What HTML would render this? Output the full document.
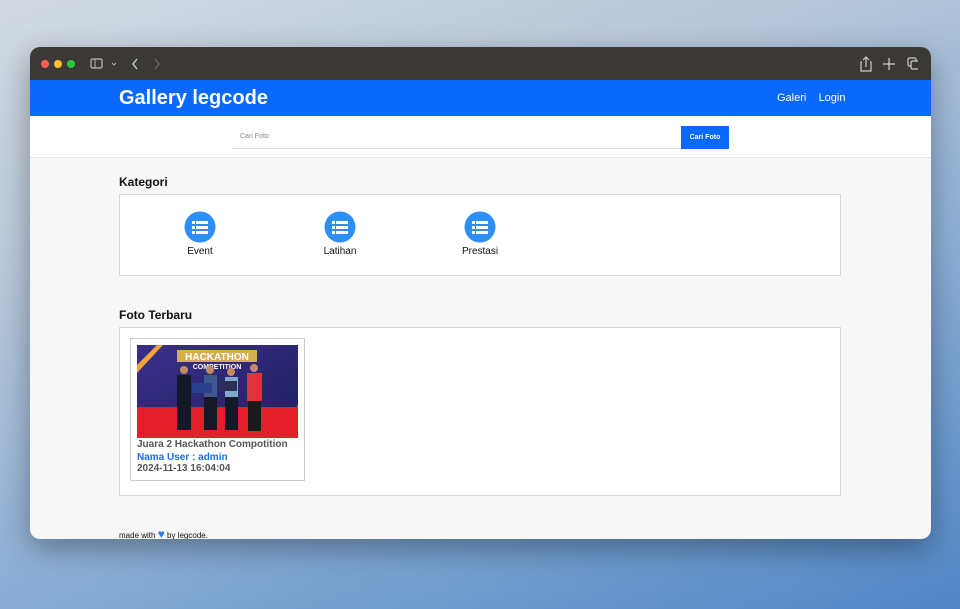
<!DOCTYPE html>
<html><head><meta charset="utf-8"><style>
*{margin:0;padding:0;box-sizing:border-box}
body{width:960px;height:609px;overflow:hidden;font-family:"Liberation Sans",Arial,sans-serif;background:linear-gradient(160deg,#d3dae2 0%,#b7c7da 30%,#8fb0d6 60%,#4f86c6 100%);position:relative}
.win{position:absolute;left:30px;top:47px;width:901px;height:492px;border-radius:10px;overflow:hidden;background:#f7f7f7;box-shadow:0 10px 30px rgba(0,0,0,.35)}
.tb{height:33px;background:#3b3936;position:relative}
.dot{position:absolute;top:13px;width:8px;height:8px;border-radius:50%}
.hdr{height:36px;background:#0a68fb;position:relative;color:#fff}
.hdr h1{position:absolute;left:89px;top:7px;font-size:20px;font-weight:bold}
.hdr .nav{position:absolute;left:747px;top:12px;font-size:11px}
.srch{height:42px;background:#fff;border-bottom:1px solid #e4e4e4;position:relative}
.inp{position:absolute;left:202px;top:10px;width:449px;height:23px;border-bottom:1px solid #ddd;font-size:7px;color:#888;padding:7px 0 0 8px}
.btn{position:absolute;left:651px;top:10px;width:48px;height:23px;background:#0a68fb;color:#fff;font-size:7px;font-weight:bold;text-align:center;line-height:23px}
h2{position:absolute;left:89px;font-size:12px;font-weight:bold;color:#111}
.box{position:absolute;left:89px;width:722px;background:#fff;border:1px solid #d6d6d6}
.cat{position:absolute;top:16px;width:80px;text-align:center;font-size:10px;color:#111}
.cat svg{display:block;margin:0 auto 3px}
.card{position:absolute;left:10px;top:10px;width:175px;height:143px;border:1px solid #ccc;background:#fff}
.ft{position:absolute;left:89px;top:483px;font-size:8px;color:#111}
</style></head><body>
<div class="win">
<div class="tb">
<div class="dot" style="left:11px;background:#ff5f57"></div>
<div class="dot" style="left:24px;background:#febc2e"></div>
<div class="dot" style="left:37px;background:#28c840"></div>
<svg style="position:absolute;left:60px;top:10px" width="32" height="14"><rect x="1" y="2" width="11" height="9" rx="1.5" fill="none" stroke="#bbb" stroke-width="1.2"/><line x1="5" y1="2" x2="5" y2="11" stroke="#bbb"/><path d="M22 6 l2 2 2-2" stroke="#bbb" fill="none"/></svg>
<svg style="position:absolute;left:100px;top:10px" width="30" height="14"><path d="M7 2 l-4 5 4 5" stroke="#ccc" fill="none" stroke-width="1.4"/><path d="M25 2 l4 5 -4 5" stroke="#666" fill="none" stroke-width="1.4"/></svg>
<svg style="position:absolute;left:828px;top:8px" width="60" height="18"><path d="M4 7 h-1 v9 h10 v-9 h-1 M8 12 V2 M5 5 l3-3 3 3" stroke="#ccc" fill="none" stroke-width="1.2"/><path d="M31 3 v12 M25 9 h12" stroke="#ccc" stroke-width="1.3"/><rect x="50" y="3" width="8" height="8" rx="1.5" fill="none" stroke="#ccc" stroke-width="1.2"/><rect x="53" y="6" width="8" height="8" rx="1.5" fill="#3b3936" stroke="#ccc" stroke-width="1.2"/></svg>
</div>
<div class="hdr"><h1>Gallery legcode</h1><div class="nav">Galeri&nbsp;&nbsp;&nbsp;&nbsp;Login</div></div>
<div class="srch"><div class="inp">Cari Foto</div><div class="btn">Cari Foto</div></div>
<h2 style="top:128px">Kategori</h2>
<div class="box" style="top:147px;height:82px">
<div class="cat" style="left:40px"><svg width="32" height="32"><circle cx="16" cy="16" r="15.5" fill="#2d8ff5"/><g fill="#fff"><rect x="8" y="10" width="3" height="3"/><rect x="12" y="10" width="12" height="3"/><rect x="8" y="15" width="3" height="3"/><rect x="12" y="15" width="12" height="3"/><rect x="8" y="20" width="3" height="3"/><rect x="12" y="20" width="12" height="3"/></g></svg>Event</div>
<div class="cat" style="left:180px"><svg width="32" height="32"><circle cx="16" cy="16" r="15.5" fill="#2d8ff5"/><g fill="#fff"><rect x="8" y="10" width="3" height="3"/><rect x="12" y="10" width="12" height="3"/><rect x="8" y="15" width="3" height="3"/><rect x="12" y="15" width="12" height="3"/><rect x="8" y="20" width="3" height="3"/><rect x="12" y="20" width="12" height="3"/></g></svg>Latihan</div>
<div class="cat" style="left:320px"><svg width="32" height="32"><circle cx="16" cy="16" r="15.5" fill="#2d8ff5"/><g fill="#fff"><rect x="8" y="10" width="3" height="3"/><rect x="12" y="10" width="12" height="3"/><rect x="8" y="15" width="3" height="3"/><rect x="12" y="15" width="12" height="3"/><rect x="8" y="20" width="3" height="3"/><rect x="12" y="20" width="12" height="3"/></g></svg>Prestasi</div>
</div>
<h2 style="top:261px">Foto Terbaru</h2>
<div class="box" style="top:280px;height:169px">
<div class="card">
<svg style="position:absolute;left:6px;top:6px" width="161" height="93">
<defs><linearGradient id="g" x1="0" y1="0" x2="1" y2="1"><stop offset="0" stop-color="#3b2f8a"/><stop offset="1" stop-color="#1d1f5e"/></linearGradient></defs>
<rect width="161" height="93" fill="url(#g)"/>
<path d="M0 20 L20 0 L26 0 L0 28Z M140 93 L161 60 L161 70 L146 93Z" fill="#f2a23a"/>
<rect x="40" y="5" width="80" height="12" fill="#f2c44a" opacity=".85"/>
<text x="80" y="15" font-size="10" font-weight="bold" fill="#fff" text-anchor="middle" font-family="Liberation Sans">HACKATHON</text>
<text x="80" y="24" font-size="7" font-weight="bold" fill="#fff" text-anchor="middle" font-family="Liberation Sans">COMPETITION</text>
<rect x="0" y="62" width="161" height="31" fill="#e3202a"/>
<g fill="#151826"><rect x="40" y="30" width="14" height="55"/><rect x="67" y="30" width="13" height="55"/><rect x="88" y="32" width="13" height="53"/></g>
<rect x="67" y="30" width="13" height="22" fill="#3d5a8a"/><rect x="88" y="32" width="13" height="20" fill="#7fa8c8"/>
<rect x="110" y="28" width="15" height="28" fill="#e0323a"/><rect x="111" y="56" width="13" height="30" fill="#1a1a1a"/>
<g fill="#c58a62"><circle cx="47" cy="25" r="4"/><circle cx="73" cy="25" r="4"/><circle cx="94" cy="27" r="4"/><circle cx="117" cy="23" r="4"/></g>
<rect x="55" y="38" width="20" height="10" fill="#2a3f8f"/><rect x="82" y="36" width="18" height="10" fill="#2b2f55"/>
</svg>
<div style="position:absolute;left:6px;top:100px;font-size:10px;font-weight:bold;color:#555;white-space:nowrap">Juara 2 Hackathon Compotition</div>
<div style="position:absolute;left:6px;top:113px;font-size:10px;font-weight:bold;color:#1a6fe8">Nama User : admin</div>
<div style="position:absolute;left:6px;top:124px;font-size:10px;font-weight:bold;color:#555">2024-11-13 16:04:04</div>
</div>
</div>
<div class="ft">made with <span style="color:#2d7ee8;font-size:12px;line-height:8px">&#9829;</span> by legcode.</div>
</div>
</body></html>
